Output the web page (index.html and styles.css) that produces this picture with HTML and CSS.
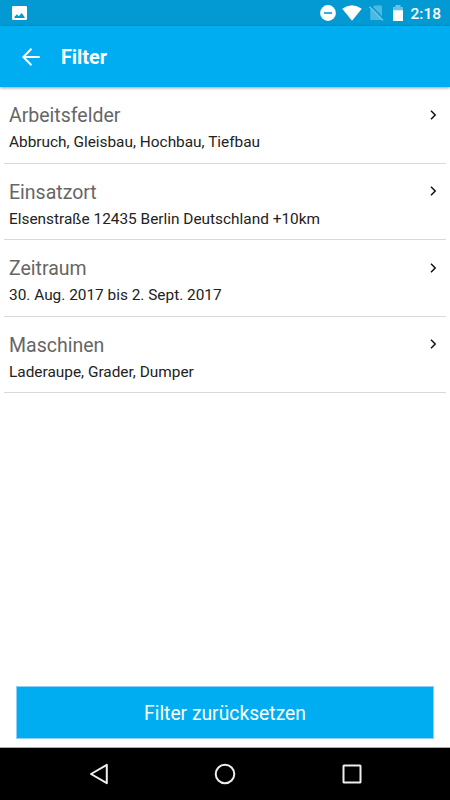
FILE: index.html
```html
<!DOCTYPE html>
<html lang="de">
<head>
  <meta charset="UTF-8">
  <title>Filter</title>
  <meta name="viewport" content="width=device-width, initial-scale=1.0">
  <link rel="stylesheet" href="styles.css">
</head>
<body>
  <div class="statusbar">
    <svg class="picture" width="15" height="14" viewBox="0 0 15 14">
      <rect width="15" height="14" rx="1.3" fill="#fff"/>
      <path d="M2.5 12V10.8L5 8.3l1.8 2L9.6 7l3 4v1z" fill="#039ad4"/>
    </svg>
    <div class="status-icons">
      <svg width="16" height="16" viewBox="0 0 16 16">
        <circle cx="8" cy="8" r="7.9" fill="#fff"/>
        <path d="M4 8h8" stroke="#039ad4" stroke-width="1.6"/>
      </svg>
      <svg class="wifi" width="20" height="16" viewBox="0 0 20 16">
        <path d="M0.2 3.7Q10-3.3 19.8 3.7L10 15.7z" fill="#fff"/>
      </svg>
      <svg class="sim" width="15" height="16" viewBox="0 0 15 16">
        <path d="M5.5.5H12q1 0 1 1V15H2.2q-1 0-1-1V4.5z" fill="#4db8e1"/>
        <path d="M1.6.6l13.5 13.8" stroke="#039ad4" stroke-width="1.4"/>
        <path d="M.3 1.7l13.7 13.8" stroke="#70c6e6" stroke-width="1.2"/>
      </svg>
      <svg class="battery" width="10" height="16" viewBox="0 0 10 16">
        <path d="M0 2h2.5V0h5v2H10v4H0z" fill="#67c2e5"/>
        <path d="M0 5.3h10V16H0z" fill="#fff"/>
      </svg>
      <span class="time">2:18</span>
    </div>
  </div>

  <header>
    <svg width="18" height="18" viewBox="0 0 18 18" fill="none" stroke="#fff" stroke-width="2">
      <path d="M17.7 9H1.5M9.5.8L1.4 9l8.1 8.2"/>
    </svg>
    <h1>Filter</h1>
  </header>

  <main>
    <div class="row">
      <div>
        <h2>Arbeitsfelder</h2>
        <p>Abbruch, Gleisbau, Hochbau, Tiefbau</p>
      </div>
      <svg class="chevron" width="7" height="10" viewBox="0 0 7 10"><path d="M1 .8L5.2 5 1 9.200"/></svg>
    </div>
    <div class="row">
      <div>
        <h2>Einsatzort</h2>
        <p>Elsenstraße 12435 Berlin Deutschland +10km</p>
      </div>
      <svg class="chevron" width="7" height="10" viewBox="0 0 7 10"><path d="M1 .8L5.2 5 1 9.200"/></svg>
    </div>
    <div class="row">
      <div>
        <h2>Zeitraum</h2>
        <p>30. Aug. 2017 bis 2. Sept. 2017</p>
      </div>
      <svg class="chevron" width="7" height="10" viewBox="0 0 7 10"><path d="M1 .8L5.2 5 1 9.200"/></svg>
    </div>
    <div class="row">
      <div>
        <h2>Maschinen</h2>
        <p>Laderaupe, Grader, Dumper</p>
      </div>
      <svg class="chevron" width="7" height="10" viewBox="0 0 7 10"><path d="M1 .8L5.2 5 1 9.200"/></svg>
    </div>
  </main>

  <button class="btn">Filter zurücksetzen</button>

  <nav>
    <svg width="20" height="22" viewBox="0 0 20 22"><path d="M17.8 1.8v18.400L2 11z"/></svg>
    <svg width="22" height="22" viewBox="0 0 22 22"><circle cx="11" cy="11" r="9.3"/></svg>
    <svg width="20" height="20" viewBox="0 0 20 20"><rect x="1.5" y="1.5" width="17" height="17" rx=".5"/></svg>
  </nav>
</body>
</html>
```

FILE: styles.css
```css
* {
  box-sizing: border-box;
}
body {
  display: flex;
  flex-direction: column;
  height: 100vh;
  margin: 0;
  background: #fff;
  font-family: Roboto, sans-serif;
  overflow: hidden;
}
h1, h2, p {
  margin: 0;
  font-weight: 400;
}
svg {
  display: block;
  flex: none;
}
.statusbar {
  display: flex;
  align-items: center;
  justify-content: space-between;
  height: 26px;
  padding: 0 9px 0 12px;
  background: #039ad4;
}
.status-icons {
  display: flex;
  align-items: center;
}
.wifi {
  margin-left: 6px;
}
.sim {
  margin-left: 7px;
}
.battery {
  margin-left: 9px;
}
.time {
  margin-left: 7.5px;
  padding-top: 2px;
  color: #fff;
  font-size: 15.5px;
  font-weight: 500;
  line-height: 24px;
}
header {
  display: flex;
  align-items: center;
  gap: 21px;
  height: 61px;
  padding: 0 22px;
  background: #00adf0;
  box-shadow: 0 1px 3px rgba(0,0,0,0.4);
}
h1 {
  padding-top: 2px;
  color: #fff;
  font-size: 19.8px;
  font-weight: 700;
  line-height: 24px;
}
main {
  flex: 1;
  padding: 0.4px 4px 0;
}
.row {
  display: flex;
  justify-content: space-between;
  height: 76.4px;
  padding: 15px 9px 0 5px;
  border-bottom: 1px solid #d9d9d9;
}
h2 {
  color: #666;
  font-size: 19.5px;
  line-height: 28px;
}
p {
  color: #222;
  font-size: 15.4px;
  line-height: 24px;
}
.chevron {
  margin-top: 7.5px;
  fill: none;
  stroke: #111;
  stroke-width: 1.5;
}
.btn {
  height: 53px;
  margin: 0 16px 8px;
  padding: 2px 0 0;
  border: 1px solid #8fcff5;
  background: #00adf0;
  color: #fff;
  font-family: inherit;
  font-size: 19.3px;
}
nav {
  display: flex;
  align-items: center;
  justify-content: space-between;
  height: 53px;
  padding: 0 88px 0 88.5px;
  border-top: 1px solid #aaa;
  background: #000;
}
nav svg {
  fill: none;
  stroke: #eee;
  stroke-width: 2;
  stroke-linejoin: round;
}
```
